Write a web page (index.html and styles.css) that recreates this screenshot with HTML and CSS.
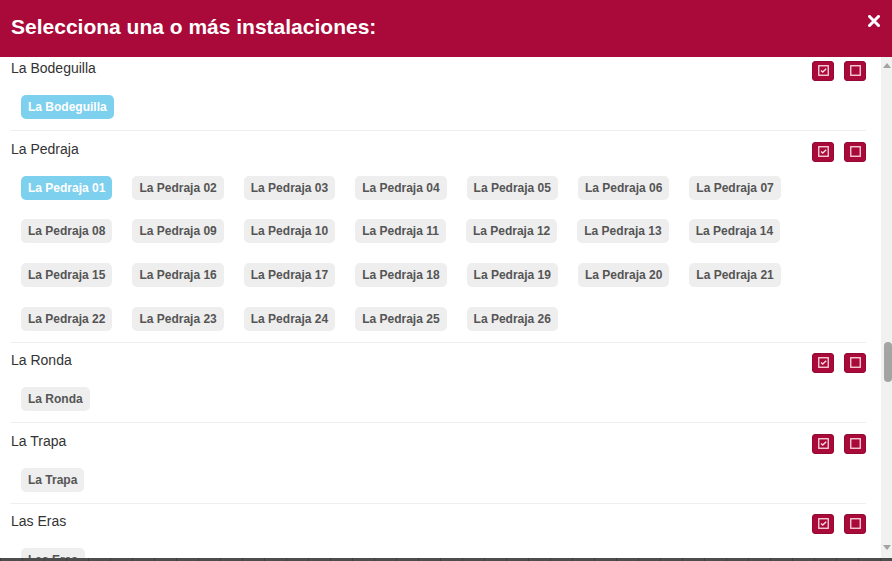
FILE: index.html
```html
<!DOCTYPE html>
<html lang="es">
<head>
<meta charset="utf-8">
<title>Instalaciones</title>
<link rel="stylesheet" href="styles.css">
</head>
<body>
<div class="modal">
  <header class="modal-header">
    <h1 class="modal-title">Selecciona una o más instalaciones:</h1>
    <button class="close-btn" aria-label="Cerrar">
      <svg width="12" height="12" viewBox="0 0 12 12"><path d="M1.5 1.5 L10.5 10.5 M10.5 1.5 L1.5 10.5" stroke="#fff" stroke-width="3" stroke-linecap="square" fill="none"/></svg>
    </button>
  </header>
  <div class="modal-body">
    <div class="scroll-area">
      <div class="groups">
        <section class="group">
          <div class="group-head">
            <span class="group-name">La Bodeguilla</span>
            <div class="actions">
              <button class="act"><svg width="11" height="11" viewBox="0 0 11 11"><rect x="0.75" y="0.75" width="9.5" height="9.5" fill="none" stroke="#f7dbe2" stroke-width="1.3"/><path d="M3 5.4 L4.8 7.1 L8.2 3.8" fill="none" stroke="#f7dbe2" stroke-width="1.4"/></svg></button>
              <button class="act"><svg width="11" height="11" viewBox="0 0 11 11"><rect x="0.75" y="0.75" width="9.5" height="9.5" fill="none" stroke="#f7dbe2" stroke-width="1.3"/></svg></button>
            </div>
          </div>
          <div class="chips">
            <span class="chip on">La Bodeguilla</span>
          </div>
        </section>

        <section class="group">
          <div class="group-head">
            <span class="group-name">La Pedraja</span>
            <div class="actions">
              <button class="act"><svg width="11" height="11" viewBox="0 0 11 11"><rect x="0.75" y="0.75" width="9.5" height="9.5" fill="none" stroke="#f7dbe2" stroke-width="1.3"/><path d="M3 5.4 L4.8 7.1 L8.2 3.8" fill="none" stroke="#f7dbe2" stroke-width="1.4"/></svg></button>
              <button class="act"><svg width="11" height="11" viewBox="0 0 11 11"><rect x="0.75" y="0.75" width="9.5" height="9.5" fill="none" stroke="#f7dbe2" stroke-width="1.3"/></svg></button>
            </div>
          </div>
          <div class="chips">
            <span class="chip on">La Pedraja 01</span>
            <span class="chip">La Pedraja 02</span>
            <span class="chip">La Pedraja 03</span>
            <span class="chip">La Pedraja 04</span>
            <span class="chip">La Pedraja 05</span>
            <span class="chip">La Pedraja 06</span>
            <span class="chip">La Pedraja 07</span>
            <span class="chip">La Pedraja 08</span>
            <span class="chip">La Pedraja 09</span>
            <span class="chip">La Pedraja 10</span>
            <span class="chip">La Pedraja 11</span>
            <span class="chip">La Pedraja 12</span>
            <span class="chip">La Pedraja 13</span>
            <span class="chip">La Pedraja 14</span>
            <span class="chip">La Pedraja 15</span>
            <span class="chip">La Pedraja 16</span>
            <span class="chip">La Pedraja 17</span>
            <span class="chip">La Pedraja 18</span>
            <span class="chip">La Pedraja 19</span>
            <span class="chip">La Pedraja 20</span>
            <span class="chip">La Pedraja 21</span>
            <span class="chip">La Pedraja 22</span>
            <span class="chip">La Pedraja 23</span>
            <span class="chip">La Pedraja 24</span>
            <span class="chip">La Pedraja 25</span>
            <span class="chip">La Pedraja 26</span>
          </div>
        </section>

        <section class="group">
          <div class="group-head">
            <span class="group-name">La Ronda</span>
            <div class="actions">
              <button class="act"><svg width="11" height="11" viewBox="0 0 11 11"><rect x="0.75" y="0.75" width="9.5" height="9.5" fill="none" stroke="#f7dbe2" stroke-width="1.3"/><path d="M3 5.4 L4.8 7.1 L8.2 3.8" fill="none" stroke="#f7dbe2" stroke-width="1.4"/></svg></button>
              <button class="act"><svg width="11" height="11" viewBox="0 0 11 11"><rect x="0.75" y="0.75" width="9.5" height="9.5" fill="none" stroke="#f7dbe2" stroke-width="1.3"/></svg></button>
            </div>
          </div>
          <div class="chips">
            <span class="chip">La Ronda</span>
          </div>
        </section>

        <section class="group">
          <div class="group-head">
            <span class="group-name">La Trapa</span>
            <div class="actions">
              <button class="act"><svg width="11" height="11" viewBox="0 0 11 11"><rect x="0.75" y="0.75" width="9.5" height="9.5" fill="none" stroke="#f7dbe2" stroke-width="1.3"/><path d="M3 5.4 L4.8 7.1 L8.2 3.8" fill="none" stroke="#f7dbe2" stroke-width="1.4"/></svg></button>
              <button class="act"><svg width="11" height="11" viewBox="0 0 11 11"><rect x="0.75" y="0.75" width="9.5" height="9.5" fill="none" stroke="#f7dbe2" stroke-width="1.3"/></svg></button>
            </div>
          </div>
          <div class="chips">
            <span class="chip">La Trapa</span>
          </div>
        </section>

        <section class="group">
          <div class="group-head">
            <span class="group-name">Las Eras</span>
            <div class="actions">
              <button class="act"><svg width="11" height="11" viewBox="0 0 11 11"><rect x="0.75" y="0.75" width="9.5" height="9.5" fill="none" stroke="#f7dbe2" stroke-width="1.3"/><path d="M3 5.4 L4.8 7.1 L8.2 3.8" fill="none" stroke="#f7dbe2" stroke-width="1.4"/></svg></button>
              <button class="act"><svg width="11" height="11" viewBox="0 0 11 11"><rect x="0.75" y="0.75" width="9.5" height="9.5" fill="none" stroke="#f7dbe2" stroke-width="1.3"/></svg></button>
            </div>
          </div>
          <div class="chips">
            <span class="chip">Las Eras</span>
          </div>
        </section>
      </div>
    </div>
    <div class="scrollbar">
      <span class="arrow up"></span>
      <div class="track"><span class="thumb"></span></div>
      <span class="arrow down"></span>
    </div>
  </div>
  <div class="under-strip"></div>
</div>
</body>
</html>
```

FILE: styles.css
```css
* { box-sizing: border-box; }

html, body {
  margin: 0;
  padding: 0;
  height: 100%;
  overflow: hidden;
  background: #fff;
  font-family: "Liberation Sans", Arial, sans-serif;
}

.modal {
  height: 561px;
  display: flex;
  flex-direction: column;
}

.modal-header {
  height: 57px;
  flex: none;
  background: #a90a39;
  display: flex;
  justify-content: space-between;
  align-items: flex-start;
  padding: 12px 12px 0 11px;
}

.modal-title {
  margin: 0;
  font-size: 21px;
  line-height: 30px;
  font-weight: bold;
  color: #fff;
}

.close-btn {
  margin-top: 3px;
  padding: 0;
  border: 0;
  background: none;
  width: 12px;
  height: 12px;
  display: flex;
}

.modal-body {
  flex: 1;
  min-height: 0;
  display: flex;
}

.scroll-area {
  flex: 1;
  min-width: 0;
  overflow: hidden;
  padding: 0 15px 0 11px;
}

.groups {
  margin-top: -7.5px;
}

.group {
  border-top: 1px solid #eeeeee;
  padding: 7.5px 0 11px;
}

.group-head {
  display: flex;
  justify-content: space-between;
  align-items: flex-start;
  height: 23px;
}

.group-name {
  font-size: 14px;
  line-height: 20px;
  color: #333;
}

.actions {
  display: flex;
  gap: 10px;
  margin-top: 3px;
}

.act {
  width: 22px;
  height: 20px;
  padding: 0;
  border: 1px solid #950833;
  border-radius: 3px;
  background: #a90a39;
  display: flex;
  align-items: center;
  justify-content: center;
}

.act svg { display: block; margin-top: -1px; }

.chips {
  display: flex;
  flex-wrap: wrap;
  column-gap: 20px;
  row-gap: 19.84px;
  margin: 14px 0 0 10px;
}

.chip {
  height: 24px;
  line-height: 24px;
  padding: 0 7px;
  border-radius: 5px;
  background: #eeeeee;
  color: #555;
  font-size: 12px;
  font-weight: bold;
  white-space: nowrap;
}

.chip.on {
  background: #7ed0ef;
  color: #fff;
}

.scrollbar {
  width: 11px;
  flex: none;
  background: #f1f1f1;
  display: flex;
  flex-direction: column;
  align-items: center;
}

.arrow {
  width: 0;
  height: 0;
  border-left: 4px solid transparent;
  border-right: 4px solid transparent;
}

.arrow.up {
  margin-top: 6px;
  border-bottom: 5px solid #a3a3a3;
}

.arrow.down {
  margin-bottom: 8px;
  border-top: 5px solid #a3a3a3;
}

.track {
  flex: 1;
  width: 100%;
  display: flex;
  justify-content: flex-end;
  align-items: flex-start;
}

.thumb {
  width: 8px;
  height: 40px;
  margin-top: 274px;
  border-radius: 4px;
  background: #a4a4a4;
}

.under-strip {
  height: 3px;
  flex: none;
  background: #4d4d4d repeating-linear-gradient(90deg, #3e3e3e 0 1px, transparent 1px 22px);
}
```
